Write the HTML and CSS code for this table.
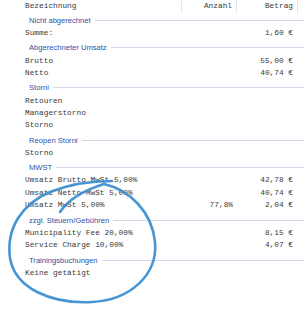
FILE: index.html
```html
<!DOCTYPE html>
<html>
<head>
<meta charset="utf-8">
<link rel="stylesheet" href="styles.css">
</head>
<body>
<div class="report">
  <div class="head">
    <div class="name">Bezeichnung</div>
    <div class="qty">Anzahl</div>
    <div class="amt">Betrag</div>
    <div class="rest"></div>
  </div>

  <div class="group first"><span>Nicht abgerechnet</span></div>
  <div class="row"><span class="name">Summe:</span><span class="qty"></span><span class="amt">1,60 €</span></div>

  <div class="group"><span>Abgerechneter Umsatz</span></div>
  <div class="row"><span class="name">Brutto</span><span class="qty"></span><span class="amt">55,00 €</span></div>
  <div class="row"><span class="name">Netto</span><span class="qty"></span><span class="amt">40,74 €</span></div>

  <div class="group"><span>Storni</span></div>
  <div class="row"><span class="name">Retouren</span><span class="qty"></span><span class="amt"></span></div>
  <div class="row"><span class="name">Managerstorno</span><span class="qty"></span><span class="amt"></span></div>
  <div class="row"><span class="name">Storno</span><span class="qty"></span><span class="amt"></span></div>

  <div class="group"><span>Reopen Storni</span></div>
  <div class="row"><span class="name">Storno</span><span class="qty"></span><span class="amt"></span></div>

  <div class="group"><span>MWST</span></div>
  <div class="row"><span class="name">Umsatz Brutto MwSt 5,00%</span><span class="qty"></span><span class="amt">42,78 €</span></div>
  <div class="row"><span class="name">Umsatz Netto MwSt 5,00%</span><span class="qty"></span><span class="amt">40,74 €</span></div>
  <div class="row"><span class="name">Umsatz MwSt 5,00%</span><span class="qty">77,8%</span><span class="amt">2,04 €</span></div>

  <div class="group"><span>zzgl. Steuern/Gebühren</span></div>
  <div class="row"><span class="name">Municipality Fee 20,00%</span><span class="qty"></span><span class="amt">8,15 €</span></div>
  <div class="row"><span class="name">Service Charge 10,00%</span><span class="qty"></span><span class="amt">4,07 €</span></div>

  <div class="group"><span>Trainingsbuchungen</span></div>
  <div class="row"><span class="name">Keine getätigt</span><span class="qty"></span><span class="amt"></span></div>

  <svg class="mark" width="304" height="314" viewBox="0 0 304 314">
    <path d="M 60 212 C 68 200, 85 190, 104 184 C 130 190, 152 212, 155 242 C 158 275, 130 300, 92 302 C 50 304, 15 288, 10 258 C 6 228, 22 204, 50 192 C 70 184, 92 181, 112 181"
      fill="none" stroke="#3d8fd1" stroke-width="2.6" stroke-linecap="round" stroke-linejoin="round" opacity="0.95"/>
  </svg>
</div>
</body>
</html>
```

FILE: styles.css
```css
html, body {
  margin: 0;
  padding: 0;
  background: #ffffff;
}

.report {
  position: relative;
  width: 304px;
  height: 314px;
  overflow: hidden;
  font-family: "Liberation Mono", "Courier New", monospace;
  font-size: 7.8px;
  color: #3a3a3a;
}

.head,
.row {
  display: grid;
  grid-template-columns: 182px 55px 61px 6px;
  align-items: center;
}

.head {
  height: 13px;
}

.head > div {
  height: 13px;
  line-height: 13px;
  border-right: 1px solid #e6e6e6;
  box-sizing: border-box;
}

.head .rest {
  border-right: none;
}

.row {
  height: 12.4px;
  line-height: 12.4px;
  white-space: nowrap;
}

.name {
  padding-left: 25px;
}

.qty {
  text-align: right;
  padding-right: 4px;
}

.amt {
  text-align: right;
  padding-right: 5px;
}

.head .qty {
  padding-right: 4px;
}

.head .amt {
  padding-right: 4px;
}

.group {
  height: 15.2px;
  display: flex;
  align-items: center;
  padding-left: 29px;
  padding-top: 2px;
  box-sizing: border-box;
  font-family: "Liberation Sans", Arial, sans-serif;
  font-size: 7.6px;
  color: #2f4fa8;
}

.group.first {
  height: 14px;
  padding-top: 0;
}

.group::after {
  content: "";
  flex: 1;
  height: 1px;
  margin-left: 4px;
  background: #cfd8e6;
}

.mark {
  position: absolute;
  left: 0;
  top: 0;
  pointer-events: none;
}
```
